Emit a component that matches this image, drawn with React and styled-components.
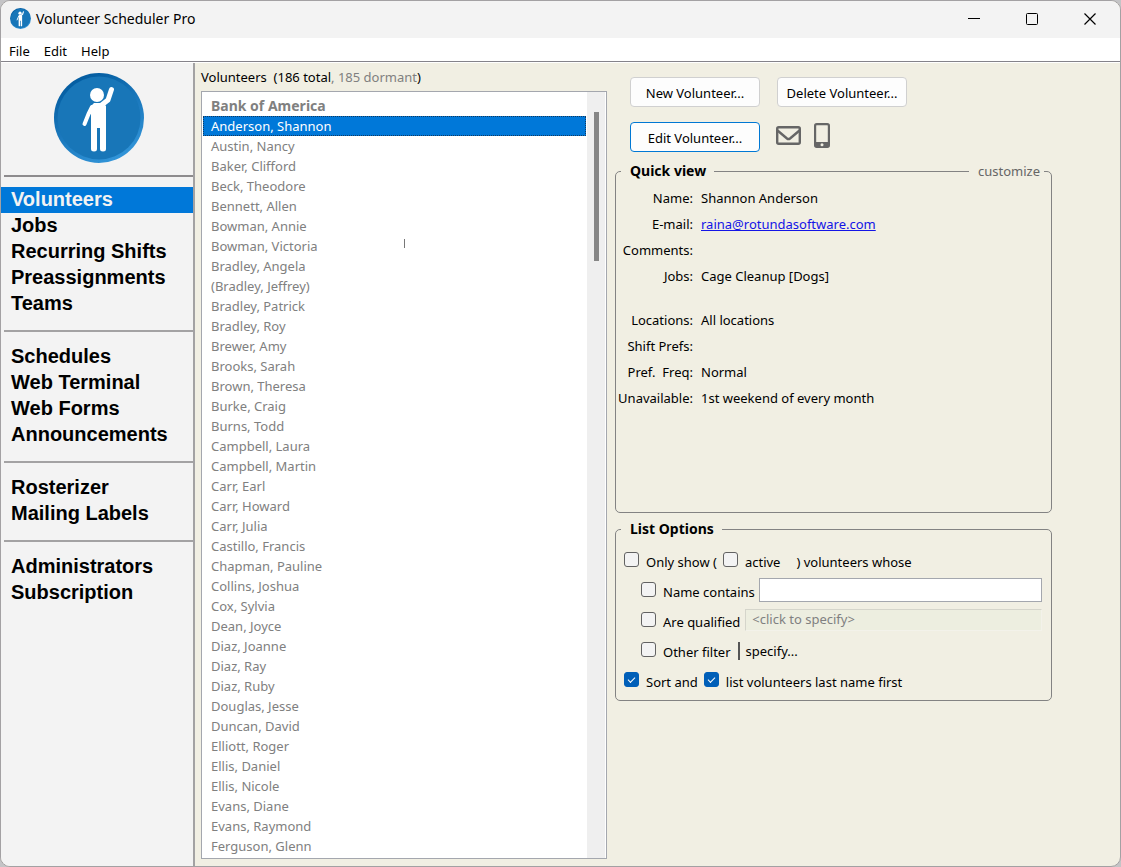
import React, { useState } from 'react';
import styled, { createGlobalStyle } from 'styled-components';

const GlobalStyle = createGlobalStyle`
* {
    box-sizing: border-box;
}
body {
    margin: 0;
    background: #c4c4c6;
    color: #000;
    font-family: "Noto Sans", Tahoma, sans-serif;
    font-size: 13px;
    line-height: 20px;
}
button, input {
    font: inherit;
    color: inherit;
}
`

const Window = styled.div`
display: flex;
flex-direction: column;
min-height: 100vh;
border: 1px solid #a3a1a3;
border-radius: 10px;
background: #f1efe3;
overflow: hidden;
`

const TitleBar = styled.header`
display: flex;
align-items: center;
height: 37px;
padding: 0 24px 2px 9px;
background: #f3f3f3;

h1 {
    flex: 1;
    margin: 0 0 0 5px;
    font-size: 14px;
    font-weight: normal;
}
`

const WindowButton = styled.button`
display: flex;
margin-left: 46px;
padding: 0;
border: none;
background: none;
`

const MenuBar = styled.nav`
display: flex;
gap: 14px;
height: 24px;
padding: 2px 8px 0;
background: #fff;
border-bottom: 1px solid #85838a;

button {
    padding: 0;
    border: none;
    background: none;
}
`

const Body = styled.div`
display: flex;
flex: 1;
border-top: 1px solid #fff;
`

const Sidebar = styled.aside`
flex: none;
width: 194px;
background: #f3f3f3;
border-right: 2px solid #a3a2a3;
`

const LogoBox = styled.div`
display: flex;
justify-content: center;
margin-left: 3px;
padding: 10px 0 12px;
border-bottom: 2px solid #8d8b8d;
`

const NavGroup = styled.ul`
list-style: none;
margin: 0 0 0 3px;
padding: ${props => props.$first ? '10px' : '12px'} 0 13px;
border-top: ${props => props.$first ? 'none' : '2px solid #a3a2a3'};
`

const NavItem = styled.a`
display: block;
height: 26px;
margin-left: -3px;
padding-left: 10px;
color: ${props => props.$active ? '#f3f3f3' : '#000'};
background: ${props => props.$active ? '#0078d9' : 'none'};
font: bold 20px/24px "Liberation Sans", Arial, sans-serif;
text-decoration: none;
`

const Main = styled.main`
display: flex;
flex: 1;
padding: 4px 68px 7px 6px;
`

const ListColumn = styled.section`
display: flex;
flex-direction: column;
flex: none;
width: 406px;
`

const ListTitle = styled.h2`
margin: 0 0 4px;
font-size: 13px;
font-weight: normal;
white-space: pre;

span {
    color: #808080;
}
`

const ListBox = styled.div`
position: relative;
display: flex;
flex: 1;
border: 1px solid #a4a7ae;
background: #fff;
`

const Names = styled.ul`
flex: 1;
list-style: none;
margin: 0;
padding: 4px 1px 2px;
`

const NameRow = styled.li`
height: 20px;
padding-left: 8px;
color: ${props => props.$selected ? '#fff' : '#808080'};
background: ${props => props.$selected ? '#0078d9' : 'none'};
outline: ${props => props.$selected ? '1px dotted #123a60' : 'none'};
outline-offset: -1px;
cursor: default;
`

const GroupRow = styled.li`
height: 20px;
padding-left: 8px;
color: #808080;
font-size: 14px;
font-weight: bold;
`

const ScrollTrack = styled.div`
width: 19px;
padding: 20px 6px 0 7px;
border-right: 1px solid #fff;
background: #efefef;
`

const ScrollThumb = styled.div`
width: 5px;
height: 149px;
background: #868686;
`

const TextCursor = styled.i`
position: absolute;
left: 202px;
top: 147px;
width: 1px;
height: 9px;
background: #777;
`

const Details = styled.section`
flex: 1;
margin-left: 8px;
padding-top: 10px;
`

const ButtonRow = styled.div`
display: flex;
align-items: center;
gap: 17px;
margin: 0 0 ${props => props.$last ? '9px' : '15px'} 15px;
`

const PushButton = styled.button`
width: 130px;
height: 30px;
padding: 1px 0 0;
border: 1px solid ${props => props.$focused ? '#0078d4' : '#d0d0d0'};
border-radius: 4px;
background: #fdfdfd;
`

const IconButton = styled.button`
display: flex;
margin: 0 -3px 0 -1px;
padding: 0 0 3px;
border: none;
background: none;
`

const Frame = styled.fieldset`
position: relative;
min-width: 0;
min-height: ${props => props.$tall ? '352px' : '0'};
margin: 0 0 6px;
padding: ${props => props.$tall ? '4px 4px 0' : '8px 9px 3px 8px'};
border: 1px solid #838383;
border-radius: 5px;

legend {
    height: 20px;
    margin-left: ${props => props.$tall ? '1px' : '-3px'};
    padding: 0 8px 0 9px;
    font-size: 14px;
    font-weight: bold;
}
`

const Customize = styled.a`
position: absolute;
top: -20px;
right: 7px;
padding: 0 4px 0 9px;
background: #f1efe3;
color: #666;
text-decoration: none;
`

const Facts = styled.dl`
display: grid;
grid-template-columns: 73px 1fr;
column-gap: 8px;
margin: 0;

dt, dd {
    margin: 0;
    min-height: 26px;
    padding: 3px 0;
    white-space: pre;
}
dt {
    justify-self: end;
}
.roomy {
    min-height: 44px;
}
a {
    color: #1414e6;
}
`

const OptionRow = styled.div`
display: flex;
align-items: center;
height: 30px;
padding-left: ${props => props.$indent ? '17px' : '0'};
`

const Check = styled.input`
appearance: none;
display: flex;
align-items: center;
justify-content: center;
flex: none;
width: 15px;
height: 15px;
margin: 0 7px 5px 0;
border: 1px solid #626262;
border-radius: 3px;
background: #f3f3f3;

&:checked {
    border-color: #005fb8;
    background: #005fb8;
}
&:checked::after {
    content: "";
    width: 6px;
    height: 3px;
    margin-bottom: 2px;
    border: solid #fff;
    border-width: 0 0 1px 1px;
    transform: rotate(-45deg);
}
`

const NameInput = styled.input`
flex: 1;
min-width: 0;
height: 24px;
margin: 0 0 5px 4px;
border: 1px solid #a4a7ae;
background: #fff;
`

const QualifiedInput = styled.input`
flex: 1;
min-width: 0;
height: 22px;
margin: 0 0 5px 5px;
padding: 0 6px 2px;
border: 1px solid;
border-color: #d5d5cb #f3f2ea #f3f2ea #d5d5cb;
background: #edeee0;

&::placeholder {
    color: #808080;
    opacity: 1;
}
`

const Specify = styled.button`
height: 18px;
margin: 0 0 3px 7px;
padding: 0 0 0 6px;
border: none;
border-left: 2px solid #555;
background: none;
line-height: 18px;
`

const Gap = styled.span`
width: ${props => props.$w}px;
`

const navGroups = [
    ['Volunteers', 'Jobs', 'Recurring Shifts', 'Preassignments', 'Teams'],
    ['Schedules', 'Web Terminal', 'Web Forms', 'Announcements'],
    ['Rosterizer', 'Mailing Labels'],
    ['Administrators', 'Subscription'],
];

const names = [
    'Anderson, Shannon', 'Austin, Nancy', 'Baker, Clifford', 'Beck, Theodore',
    'Bennett, Allen', 'Bowman, Annie', 'Bowman, Victoria', 'Bradley, Angela',
    '(Bradley, Jeffrey)', 'Bradley, Patrick', 'Bradley, Roy', 'Brewer, Amy',
    'Brooks, Sarah', 'Brown, Theresa', 'Burke, Craig', 'Burns, Todd',
    'Campbell, Laura', 'Campbell, Martin', 'Carr, Earl', 'Carr, Howard',
    'Carr, Julia', 'Castillo, Francis', 'Chapman, Pauline', 'Collins, Joshua',
    'Cox, Sylvia', 'Dean, Joyce', 'Diaz, Joanne', 'Diaz, Ray', 'Diaz, Ruby',
    'Douglas, Jesse', 'Duncan, David', 'Elliott, Roger', 'Ellis, Daniel',
    'Ellis, Nicole', 'Evans, Diane', 'Evans, Raymond', 'Ferguson, Glenn',
];

const Logo = ({ size }) => (
    <svg width={size} height={size} viewBox="0 0 90 90" aria-hidden="true">
        <defs>
            <linearGradient id={`rim${size}`} x1="0.2" y1="0" x2="0.7" y2="1">
                <stop offset="0" stopColor="#00589c" />
                <stop offset="1" stopColor="#3396da" />
            </linearGradient>
        </defs>
        <circle cx="45" cy="45" r="45" fill={`url(#rim${size})`} />
        <circle cx="45" cy="45" r="41.500" fill="#1876b8" />
        <circle cx="43" cy="22" r="7" fill="#fff" />
        <path d="M57.500 16.500 L54 27 L47 32.500" fill="none" stroke="#fff" strokeWidth="5" strokeLinecap="round" strokeLinejoin="round" />
        <path d="M38 34 L34.500 41 L30.500 51" fill="none" stroke="#fff" strokeWidth="4" strokeLinecap="round" strokeLinejoin="round" />
        <path d="M40 30 H49 L52 33 V76 Q52 78.500 49 78.500 Q46 78.500 46 76 V55 H43 V76 Q43 78.500 40 78.500 Q37 78.500 37 76 V33 Z" fill="#fff" />
    </svg>
);

const MailIcon = () => (
    <svg width="25" height="19" viewBox="0 0 25 19" fill="none" stroke="#666" strokeWidth="2.4" strokeLinejoin="round">
        <rect x="1.200" y="1.200" width="22.600" height="16.600" rx="1.500" />
        <path d="M1.500 4.500 L11 12.500 Q12.500 13.700 14 12.500 L23.500 4.500" />
    </svg>
);

const PhoneIcon = () => (
    <svg width="16" height="25" viewBox="0 0 16 25">
        <rect x="1.100" y="1.100" width="13.800" height="22.800" rx="1.600" fill="none" stroke="#666" strokeWidth="2.200" />
        <path d="M1 19 H15 V24 H1 Z" fill="#666" />
        <circle cx="8" cy="21.700" r="1.500" fill="#f1efe3" />
    </svg>
);

const App = () => {
    const [selected, setSelected] = useState('Anderson, Shannon');

    return (
        <Window>
            <GlobalStyle />
            <TitleBar>
                <Logo size={21} />
                <h1>Volunteer Scheduler Pro</h1>
                <WindowButton aria-label="Minimize">
                    <svg width="12" height="12"><path d="M0 5.500H12" stroke="#000" /></svg>
                </WindowButton>
                <WindowButton aria-label="Maximize">
                    <svg width="12" height="12"><rect x="0.500" y="0.500" width="11" height="11" rx="1" fill="none" stroke="#000" /></svg>
                </WindowButton>
                <WindowButton aria-label="Close">
                    <svg width="12" height="12"><path d="M0.500 0.500L11.500 11.500M11.500 0.500L0.500 11.500" stroke="#000" strokeWidth="1.200" /></svg>
                </WindowButton>
            </TitleBar>
            <MenuBar>
                <button>File</button>
                <button>Edit</button>
                <button>Help</button>
            </MenuBar>
            <Body>
                <Sidebar>
                    <LogoBox><Logo size={90} /></LogoBox>
                    {navGroups.map((group, i) => (
                        <NavGroup key={i} $first={i === 0}>
                            {group.map(item => (
                                <li key={item}>
                                    <NavItem href="#" $active={item === 'Volunteers'}>{item}</NavItem>
                                </li>
                            ))}
                        </NavGroup>
                    ))}
                </Sidebar>
                <Main>
                    <ListColumn>
                        <ListTitle>{'Volunteers  (186 total'}<span>, 185 dormant</span>)</ListTitle>
                        <ListBox>
                            <Names>
                                <GroupRow>Bank of America</GroupRow>
                                {names.map(name => (
                                    <NameRow key={name} $selected={name === selected} onClick={() => setSelected(name)}>{name}</NameRow>
                                ))}
                            </Names>
                            <ScrollTrack><ScrollThumb /></ScrollTrack>
                            <TextCursor />
                        </ListBox>
                    </ListColumn>
                    <Details>
                        <ButtonRow>
                            <PushButton>New Volunteer...</PushButton>
                            <PushButton>Delete Volunteer...</PushButton>
                        </ButtonRow>
                        <ButtonRow $last>
                            <PushButton $focused>Edit Volunteer...</PushButton>
                            <IconButton aria-label="Send e-mail"><MailIcon /></IconButton>
                            <IconButton aria-label="Send text"><PhoneIcon /></IconButton>
                        </ButtonRow>
                        <Frame $tall>
                            <legend>Quick view</legend>
                            <Customize href="#">customize</Customize>
                            <Facts>
                                <dt>Name:</dt><dd>Shannon Anderson</dd>
                                <dt>E-mail:</dt><dd><a href="mailto:raina@rotundasoftware.com">raina@rotundasoftware.com</a></dd>
                                <dt>Comments:</dt><dd></dd>
                                <dt className="roomy">Jobs:</dt><dd>Cage Cleanup [Dogs]</dd>
                                <dt>Locations:</dt><dd>All locations</dd>
                                <dt>Shift Prefs:</dt><dd></dd>
                                <dt>{'Pref.  Freq:'}</dt><dd>Normal</dd>
                                <dt>Unavailable:</dt><dd>1st weekend of every month</dd>
                            </Facts>
                        </Frame>
                        <Frame>
                            <legend>List Options</legend>
                            <OptionRow>
                                <Check type="checkbox" id="only" />
                                <label htmlFor="only">Only show (</label>
                                <Gap $w={6} />
                                <Check type="checkbox" id="active" />
                                <label htmlFor="active">active</label>
                                <Gap $w={16} />
                                <span>) volunteers whose</span>
                            </OptionRow>
                            <OptionRow $indent>
                                <Check type="checkbox" id="name" />
                                <label htmlFor="name">Name contains</label>
                                <NameInput type="text" aria-label="Name contains" />
                            </OptionRow>
                            <OptionRow $indent>
                                <Check type="checkbox" id="qualified" />
                                <label htmlFor="qualified">Are qualified</label>
                                <QualifiedInput type="text" disabled placeholder="<click to specify>" aria-label="Qualified for" />
                            </OptionRow>
                            <OptionRow $indent>
                                <Check type="checkbox" id="other" />
                                <label htmlFor="other">Other filter</label>
                                <Specify>specify...</Specify>
                            </OptionRow>
                            <OptionRow>
                                <Check type="checkbox" id="sort" defaultChecked />
                                <label htmlFor="sort">Sort and</label>
                                <Gap $w={6} />
                                <Check type="checkbox" id="lastfirst" defaultChecked />
                                <label htmlFor="lastfirst">list volunteers last name first</label>
                            </OptionRow>
                        </Frame>
                    </Details>
                </Main>
            </Body>
        </Window>
    )
};

export default App;
